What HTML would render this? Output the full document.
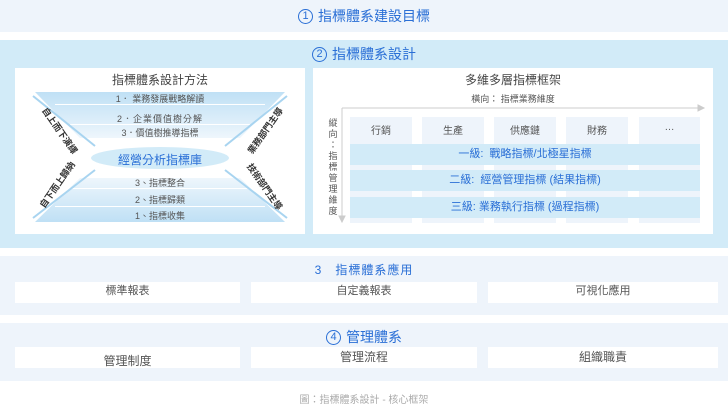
<!DOCTYPE html>
<html><head><meta charset="utf-8"><style>
*{margin:0;padding:0;box-sizing:border-box}
body{width:728px;height:408px;background:#fff;font-family:"Liberation Sans","Noto Sans CJK TC",sans-serif;position:relative;overflow:hidden;color:#555}
.a{position:absolute}
.c{text-align:center}
.blue{color:#2a6fd6}
.circ{display:inline-block;width:15px;height:15px;border:1.5px solid #2a6fd6;border-radius:50%;font-size:11px;line-height:12px;text-align:center;vertical-align:2px;margin-right:5px}
.wb{background:#fff;position:absolute}
.band{position:absolute;left:0;right:0;text-align:center;font-size:9px;color:#555}
.col{position:absolute;top:117px;height:106px;background:#eef4fb;font-size:10px;text-align:center;padding-top:5px;color:#555}
.row{position:absolute;left:350px;width:350px;height:21px;background:#d2ebf8;color:#2a6fd6;font-size:11px;text-align:center;line-height:21px}
.side{position:absolute;font-size:9px;color:#333;font-weight:bold;white-space:nowrap}
</style></head><body>
<div class="a" style="left:0;top:0;width:728px;height:32px;background:#eef4fb"></div>
<div class="a c blue" style="left:0;top:6px;width:728px;font-size:14px"><span class="circ">1</span>指標體系建設目標</div>

<div class="a" style="left:0;top:40px;width:728px;height:208px;background:#d2ebf8"></div>
<div class="a c blue" style="left:0;top:44px;width:728px;font-size:14px"><span class="circ">2</span>指標體系設計</div>

<div class="wb" style="left:15px;top:68px;width:290px;height:166px"></div>
<div class="a c" style="left:15px;top:71px;width:290px;font-size:12px;color:#444">指標體系設計方法</div>
<svg class="a" style="left:15px;top:68px" width="290" height="166">
<defs><linearGradient id="g" x1="0" x2="0" y1="0" y2="1"><stop offset="0" stop-color="#bfe0f5"/><stop offset="1" stop-color="#eef6fc"/></linearGradient>
<linearGradient id="h" x1="0" x2="0" y1="0" y2="1"><stop offset="0" stop-color="#eef6fc"/><stop offset="1" stop-color="#bfe0f5"/></linearGradient></defs>
<path d="M20 24 L270 24 L225 70 L65 70 Z" fill="url(#g)"/>
<path d="M65 110 L225 110 L270 154 L20 154 Z" fill="url(#h)"/>
<rect x="40" y="36" width="210" height="1" fill="#fff"/>
<rect x="55" y="56" width="180" height="1" fill="#fff"/>
<rect x="55" y="120" width="180" height="1" fill="#fff"/>
<rect x="40" y="138" width="210" height="1" fill="#fff"/>
<ellipse cx="145" cy="90" rx="69" ry="11" fill="#d2ebf8"/>
<g stroke="#a8d4f0" stroke-width="2" fill="#a8d4f0">
<line x1="18" y1="28" x2="80" y2="78"/><line x1="18" y1="150" x2="80" y2="102"/>
<line x1="272" y1="28" x2="210" y2="78"/><line x1="272" y1="150" x2="210" y2="102"/>
</g></svg>
<div class="band" style="left:15px;width:290px;top:92px">1．&nbsp;業務發展戰略解讀</div>
<div class="band" style="left:15px;width:290px;top:112px;letter-spacing:1px">2．企業價值樹分解</div>
<div class="band" style="left:15px;width:290px;top:126px">3．價值樹推導指標</div>
<div class="band blue" style="left:15px;width:290px;top:151px;font-size:12px;color:#2a6fd6">經營分析指標庫</div>
<div class="band" style="left:15px;width:290px;top:176px">3、指標整合</div>
<div class="band" style="left:15px;width:290px;top:193px">2、指標歸類</div>
<div class="band" style="left:15px;width:290px;top:209px">1、指標收集</div>
<div class="side" style="left:33px;top:124px;transform:rotate(55deg)">自上而下演繹</div>
<div class="side" style="left:30px;top:178px;transform:rotate(-55deg)">自下而上歸納</div>
<div class="side" style="left:238px;top:124px;transform:rotate(-55deg)">業務部門主導</div>
<div class="side" style="left:238px;top:180px;transform:rotate(55deg)">技術部門主導</div>

<div class="wb" style="left:313px;top:68px;width:400px;height:166px"></div>
<div class="a c" style="left:313px;top:71px;width:400px;font-size:12px;color:#444">多維多層指標框架</div>
<div class="a c" style="left:313px;top:92px;width:400px;font-size:9px">橫向：&nbsp;指標業務維度</div>
<svg class="a" style="left:338px;top:104px" width="370" height="120"><g stroke="#ccc" fill="#ccc"><line x1="4" y1="4" x2="360" y2="4"/><path d="M360 1 L366 4 L360 7Z"/><line x1="4" y1="4" x2="4" y2="112"/><path d="M1 112 L4 118 L7 112Z"/></g></svg>
<div class="a" style="left:327px;top:118px;width:12px;font-size:9px;line-height:11px;text-align:center">縱<br>向<br>：<br>指<br>標<br>管<br>理<br>維<br>度</div>
<div class="col" style="left:350px;width:62px">行銷</div>
<div class="col" style="left:422px;width:62px">生產</div>
<div class="col" style="left:494px;width:62px">供應鏈</div>
<div class="col" style="left:566px;width:62px">財務</div>
<div class="col" style="left:639px;width:61px">…</div>
<div class="row" style="top:144px">一級:&nbsp; 戰略指標/北極星指標</div>
<div class="row" style="top:170px">二級:&nbsp; 經營管理指標 (結果指標)</div>
<div class="row" style="top:197px">三級: 業務執行指標 (過程指標)</div>

<div class="a" style="left:0;top:256px;width:728px;height:59px;background:#eef4fb"></div>
<div class="a c blue" style="left:0;top:261px;width:728px;font-size:12px;letter-spacing:1px">3&nbsp;&nbsp; 指標體系應用</div>
<div class="wb c" style="left:15px;top:282px;width:225px;height:21px;line-height:19px;font-size:11px">標準報表</div>
<div class="wb c" style="left:251px;top:282px;width:226px;height:21px;line-height:19px;font-size:11px">自定義報表</div>
<div class="wb c" style="left:488px;top:282px;width:230px;height:21px;line-height:19px;font-size:11px">可視化應用</div>

<div class="a" style="left:0;top:323px;width:728px;height:58px;background:#eef4fb"></div>
<div class="a c blue" style="left:0;top:327px;width:728px;font-size:14px"><span class="circ">4</span>管理體系</div>
<div class="wb c" style="left:15px;top:347px;width:225px;height:21px;line-height:28px;font-size:12px">管理制度</div>
<div class="wb c" style="left:251px;top:347px;width:226px;height:21px;line-height:20px;font-size:12px">管理流程</div>
<div class="wb c" style="left:488px;top:347px;width:230px;height:21px;line-height:20px;font-size:12px">組織職責</div>

<div class="a c" style="left:0;top:391px;width:728px;font-size:10px;color:#aaa">圖：指標體系設計 - 核心框架</div>
</body></html>
